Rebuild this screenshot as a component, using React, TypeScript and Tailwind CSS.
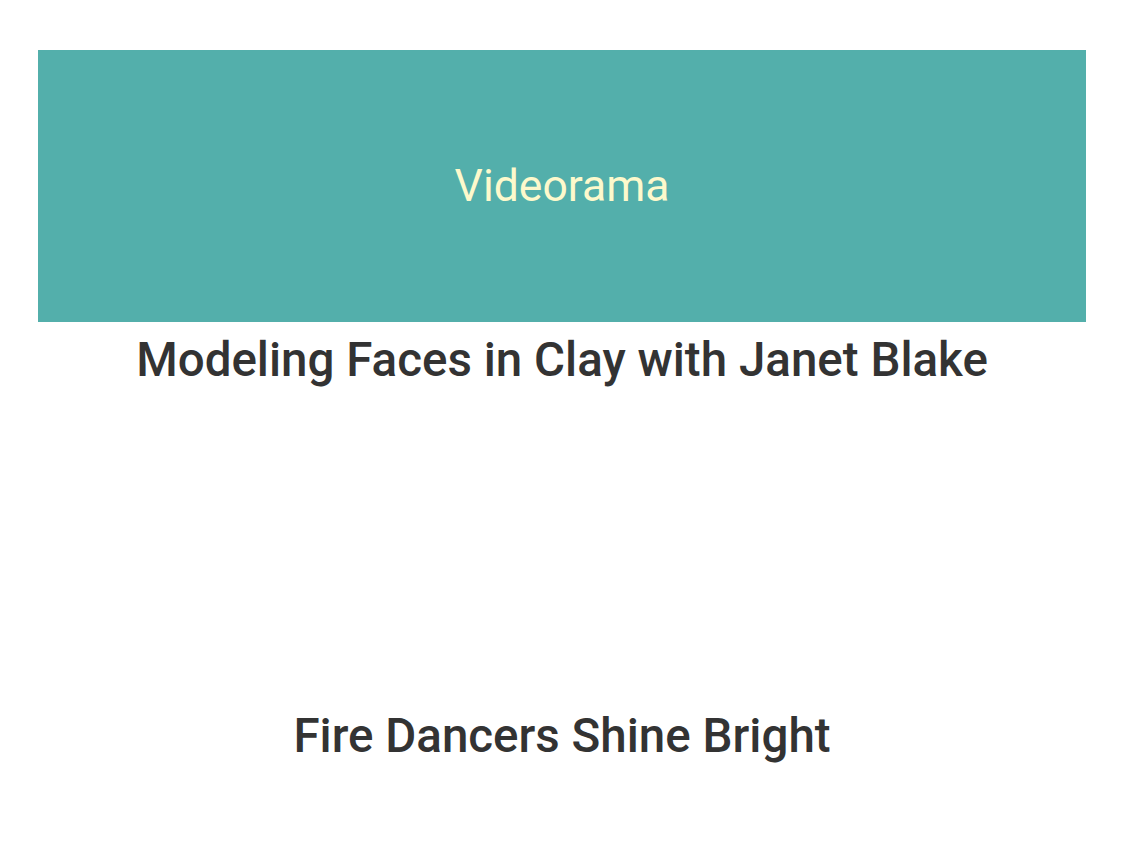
import React from "react";

export default function App() {
    return (
        <div className="min-h-screen bg-white pt-[50px]" style={{ fontFamily: "Roboto, sans-serif" }}>
            <div className="ml-[38px] w-[1048px]">
                <div className="h-[272px] bg-[#53afab] flex items-center justify-center">
                    <span className="text-[#fdf9cc] text-[44.5px]">Videorama</span>
                </div>
                <h2 className="text-center text-[#333333] text-[47.5px] font-medium leading-[76px]">
                    Modeling Faces in Clay with Janet Blake
                </h2>
                <div className="h-[300px]" />
                <h2 className="text-center text-[#333333] text-[47.5px] font-medium leading-[76px]">
                    Fire Dancers Shine Bright
                </h2>
            </div>
        </div>
    );
}
